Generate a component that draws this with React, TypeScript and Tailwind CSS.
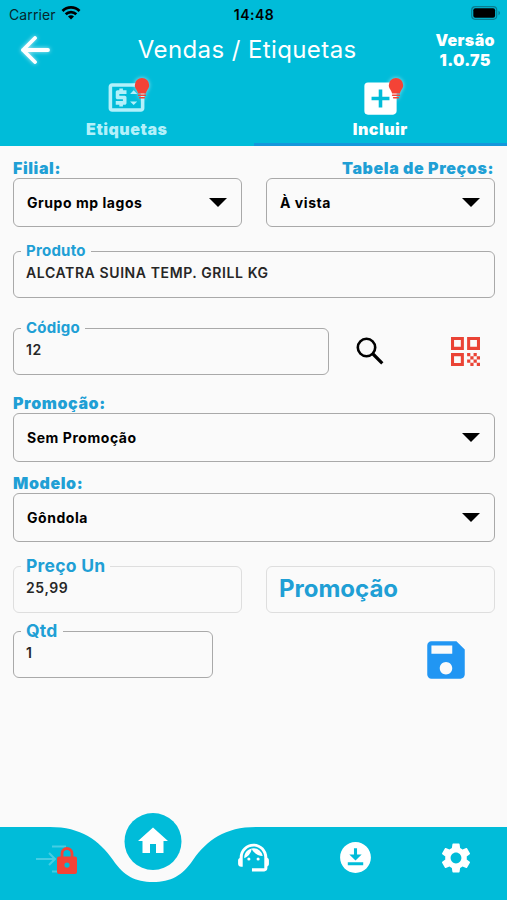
import React from 'react';
import {
  MdAddBox,
  MdDownloadForOffline,
  MdHome,
  MdOutlinePriceChange,
  MdSave,
  MdSettings,
  MdSupportAgent,
} from 'react-icons/md';
import { clsx } from 'clsx';

const Bulb = () => (
  <svg viewBox="0 0 16 22" className="absolute -top-px left-[29px] h-[22px] w-4 drop-shadow-[0_0_2px_rgba(255,255,255,0.6)]">
    <path d="M8 0a7.2 7.2 0 0 0-7.2 7.2c0 3.4 2.6 4.6 3.3 8.3h7.8c.7-3.7 3.3-4.9 3.3-8.3A7.2 7.2 0 0 0 8 0Z" fill="#f44336" />
    <path d="M4.6 17.2h6.8M5.6 19.7h4.8" stroke="#f44336" strokeWidth="1.5" strokeLinecap="round" />
  </svg>
);

const SearchIcon = () => (
  <svg viewBox="0 0 28 28" className="-mt-px ml-[27px] size-7" fill="none" stroke="black">
    <circle cx="10.5" cy="10.5" r="8.7" strokeWidth="2.6" />
    <path d="M17 17l9.300 9.300" strokeWidth="3.2" />
  </svg>
);

const QrIcon = () => (
  <svg viewBox="3 3 18 18" className="ml-[67px] size-[29px]" fill="#ea4335">
    <path
      fillRule="evenodd"
      d="M3 3h8v8H3Zm1.900 1.900v4.200h4.200V4.900ZM13 3h8v8h-8Zm1.900 1.900v4.200h4.200V4.900ZM3 13h8v8H3Zm1.900 1.900v4.200h4.200v-4.200Z"
    />
    <path d="M13 13h2v2h-2zM17 13h2v2h-2zM15 15h2v2h-2zM19 15h2v2h-2zM13 17h2v2h-2zM17 17h2v2h-2zM15 19h2v2h-2zM19 19h2v2h-2z" />
  </svg>
);

const LockIcon = () => (
  <svg viewBox="0 0 20 27" className="mt-[3px] h-[27px] w-5">
    <path d="M5 10V6.500a5 5 0 0 1 10 0V10" fill="none" stroke="#f44336" strokeWidth="2.8" />
    <path
      fill="#f44336"
      fillRule="evenodd"
      d="M2 9.500h16a2 2 0 0 1 2 2V25a2 2 0 0 1-2 2H2a2 2 0 0 1-2-2V11.500a2 2 0 0 1 2-2Zm8 6a2.600 2.600 0 1 0 0 5.200 2.600 2.600 0 0 0 0-5.200Z"
    />
  </svg>
);

const StatusBar = () => (
  <div className="flex h-7 items-center justify-between pr-[6px] pl-[9px] text-[14px] text-[#06272d]">
    <div className="flex w-40 items-center gap-[5px]">
      <span className="tracking-[0.1px]">Carrier</span>
      <svg viewBox="0 0 20 14" className="-mt-[2px] h-[14px] w-5" fill="none" stroke="black" strokeWidth="2.7">
        <path d="M1.500 5a12 12 0 0 1 17 0M4.700 8.300a7.500 7.500 0 0 1 10.600 0" />
        <path d="m10 13.500-3-3a4.200 4.200 0 0 1 6 0Z" fill="black" stroke="none" />
      </svg>
    </div>
    <span className="-ml-[2px] font-semibold tracking-[0.5px] text-black">14:48</span>
    <div className="flex w-40 items-center justify-end">
      <svg viewBox="0 0 30 14" className="-mt-[2px] h-[14px] w-[30px]">
        <rect x=".7" y=".7" width="25" height="12.6" rx="3.5" fill="none" stroke="#087e91" strokeWidth="1.2" />
        <rect x="2.3" y="2.3" width="21.8" height="9.4" rx="2" />
        <path d="M27.500 4.800v4.400c2-.8 2-3.600 0-4.400Z" fill="#087e91" />
      </svg>
    </div>
  </div>
);

const Header = () => (
  <header className="h-[146px] bg-[#00bcd9] text-white">
    <StatusBar />
    <div className="flex h-11 items-center justify-between pr-3 pl-5">
      <svg
        viewBox="0 0 30 30"
        className="size-[30px] drop-shadow-[0_0_2px_rgba(255,255,255,0.7)]"
        fill="none"
        stroke="white"
        strokeWidth="3.8"
        strokeLinecap="round"
        strokeLinejoin="round"
      >
        <path d="M28 15H3M15 3 3 15l12 12" />
      </svg>
      <h1 className="ml-[9px] text-[24px] tracking-[0.4px]">Vendas / Etiquetas</h1>
      <div className="text-center text-[16px] leading-5 font-black tracking-[0.4px]">
        Versão
        <br />
        1.0.75
      </div>
    </div>
    <nav className="grid h-[74px] grid-cols-2">
      <a className="flex flex-col items-center pt-[7px] text-[#b3f0fa]">
        <span className="relative h-10">
          <MdOutlinePriceChange className="-mt-[3px] size-[43px]" />
          <Bulb />
        </span>
        <span className="text-[16px] leading-5 font-black tracking-[0.5px]">Etiquetas</span>
      </a>
      <a className="flex flex-col items-center border-b-[3px] border-[#1597db] pt-[7px]">
        <span className="relative h-10">
          <MdAddBox className="-mt-[2px] size-[43px]" />
          <Bulb />
        </span>
        <span className="text-[16px] leading-5 font-black tracking-[0.5px]">Incluir</span>
      </a>
    </nav>
  </header>
);

const Select = ({ label, value, right }: { label: string; value: string; right?: boolean }) => (
  <div>
    <div className={clsx('h-[19px] text-[16px] leading-[19px] font-black tracking-[0.6px] text-[#209fd5]', right && 'pr-px text-right')}>
      {label}
    </div>
    <button className="flex h-[49px] w-full items-center justify-between rounded-[6px] border border-[#a9a9a9] pr-[14px] pl-[13px] text-[14px] font-bold tracking-[0.55px] text-black">
      {value}
      <svg viewBox="0 0 18 9" className="h-[9px] w-[18px]">
        <path d="M0 0h18L9 9Z" />
      </svg>
    </button>
  </div>
);

type FieldProps = { label: string; value: string; className?: string; labelClass?: string; disabled?: boolean };

const Field = ({ label, value, className, labelClass, disabled }: FieldProps) => (
  <div
    className={clsx(
      'relative h-[47px] rounded-[6px] border pt-[11px] pl-3 text-[14px] leading-5 font-semibold tracking-[0.6px] text-[#262626]',
      disabled ? 'border-[#dedede]' : 'border-[#a9a9a9]',
      className
    )}
  >
    <span
      className={clsx(
        'absolute left-[7px] bg-[#fafafa] px-[5px] font-bold tracking-[0.25px] text-[#209fd5]',
        labelClass ?? '-top-[11px] text-[15px]'
      )}
    >
      {label}
    </span>
    {value}
  </div>
);

const BottomNav = () => (
  <footer className="relative h-[90px]">
    <svg viewBox="0 0 507 90" className="absolute inset-0 h-full w-full" fill="#00bcd9">
      <path d="M0 17h50c31 0 49 13 63 33 11 16 22 22 40 22s29-6 40-22c14-20 32-33 63-33h251v73H0Z" />
      <circle cx="153" cy="31.5" r="28.5" />
    </svg>
    <div className="relative grid h-full grid-cols-5 text-white">
      <a className="flex items-center justify-center pt-[7px] pl-[11px]">
        <svg viewBox="0 0 32 28" className="-mr-[11px] h-7 w-8" fill="none" stroke="#45cde3" strokeWidth="2">
          <path d="M0 14h19M13 8l6 6-6 6M16 1.500h14M16 26.500h14" />
        </svg>
        <LockIcon />
      </a>
      <a className="flex justify-center pt-[13px] pl-[2px]">
        <MdHome className="size-9" />
      </a>
      <a className="flex items-center justify-center pt-[5px] pl-px">
        <MdSupportAgent className="size-[37px]" />
      </a>
      <a className="flex items-center justify-center pt-[5px] pl-px">
        <MdDownloadForOffline className="size-[37px]" />
      </a>
      <a className="flex items-center justify-center pt-[5px]">
        <MdSettings className="size-9" />
      </a>
    </div>
  </footer>
);

export default function App() {
  return (
    <div className="flex h-[900px] w-[507px] flex-col overflow-hidden bg-[#fafafa] font-['Inter',sans-serif]">
      <Header />
      <main className="flex-1 pt-[13px] pr-3 pl-[13px]">
        <div className="grid grid-cols-2 gap-6">
          <Select label="Filial:" value="Grupo mp lagos" />
          <Select label="Tabela de Preços:" value="À vista" right />
        </div>
        <Field label="Produto" value="ALCATRA SUINA TEMP. GRILL KG" className="mt-6" />
        <div className="mt-[30px] flex items-center">
          <Field label="Código" value="12" className="w-[316px]" />
          <SearchIcon />
          <QrIcon />
        </div>
        <div className="mt-[19px]">
          <Select label="Promoção:" value="Sem Promoção" />
        </div>
        <div className="mt-3">
          <Select label="Modelo:" value="Gôndola" />
        </div>
        <div className="mt-6 grid grid-cols-2 gap-6">
          <Field label="Preço Un" value="25,99" labelClass="-top-[11px] text-[17.5px]" disabled />
          <div className="flex h-[47px] items-center rounded-[6px] border border-[#dedede] pb-[2px] pl-3 text-[24px] font-bold text-[#209fd5]">
            Promoção
          </div>
        </div>
        <div className="mt-[18px] flex items-center">
          <Field label="Qtd" value="1" className="w-[200px]" labelClass="-top-[11px] text-[17.5px]" />
          <MdSave className="mt-0 -mb-[10px] ml-[208px] size-[50px] text-[#2196f3]" />
        </div>
      </main>
      <BottomNav />
    </div>
  );
}
